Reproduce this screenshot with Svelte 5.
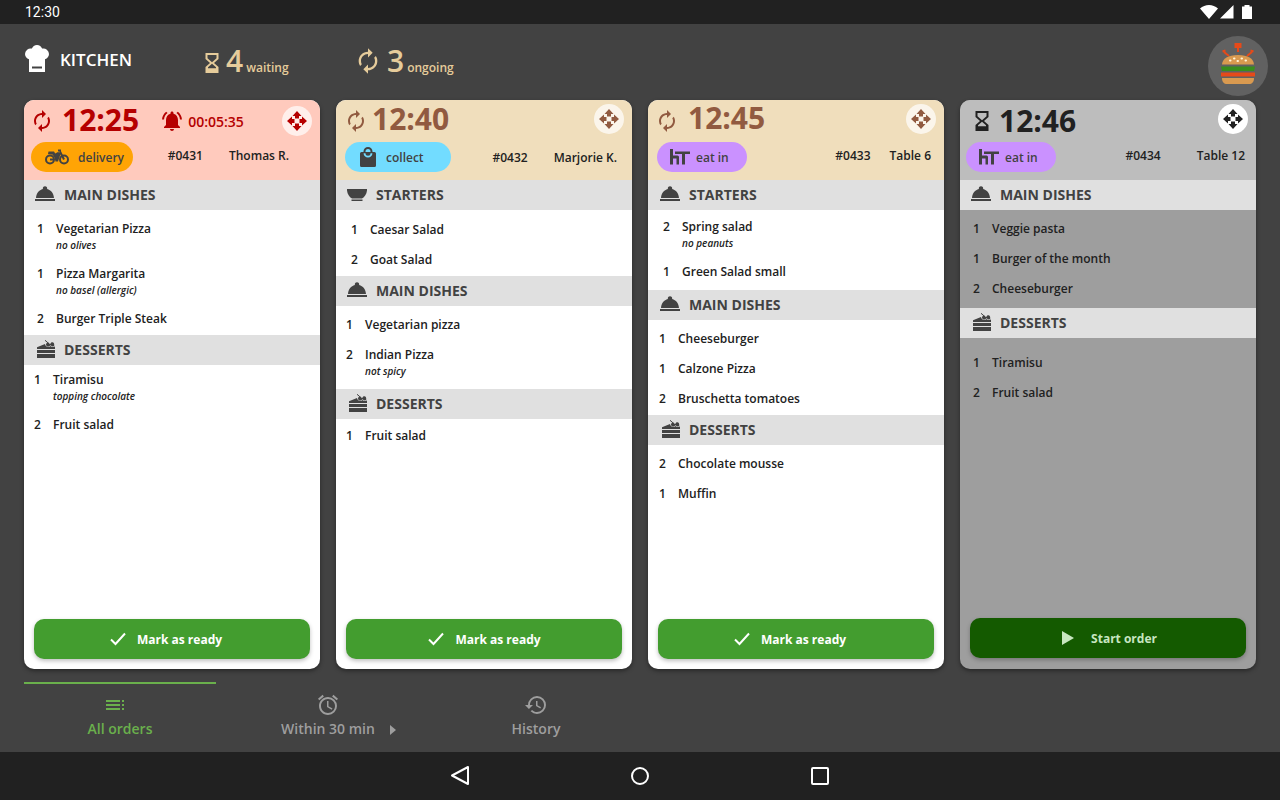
<script>
  const orders = [
    {
      id: '#0431', time: '12:25', status: 'late', slot: 'first', late: '00:05:35',
      type: 'delivery', customer: 'Thomas R.',
      sections: [
        { name: 'MAIN DISHES', icon: 'dome', inset: 'mid', space: 'trim', items: [
          { qty: 1, name: 'Vegetarian Pizza', note: 'no olives' },
          { qty: 1, name: 'Pizza Margarita', note: 'no basel (allergic)' },
          { qty: 2, name: 'Burger Triple Steak' }
        ]},
        { name: 'DESSERTS', icon: 'cake', inset: 'near', space: 'flush', items: [
          { qty: 1, name: 'Tiramisu', note: 'topping chocolate' },
          { qty: 2, name: 'Fruit salad' }
        ]}
      ]
    },
    {
      id: '#0432', time: '12:40', status: 'ongoing', slot: 'second',
      type: 'collect', customer: 'Marjorie K.',
      sections: [
        { name: 'STARTERS', icon: 'bowl', inset: 'far', space: 'drop', items: [
          { qty: 1, name: 'Caesar Salad' },
          { qty: 2, name: 'Goat Salad' }
        ]},
        { name: 'MAIN DISHES', icon: 'dome', inset: 'near', space: 'even', items: [
          { qty: 1, name: 'Vegetarian pizza' },
          { qty: 2, name: 'Indian Pizza', note: 'not spicy' }
        ]},
        { name: 'DESSERTS', icon: 'cake', inset: 'near', space: 'lift', items: [
          { qty: 1, name: 'Fruit salad' }
        ]}
      ]
    },
    {
      id: '#0433', time: '12:45', status: 'ongoing', slot: 'third',
      type: 'eat in', customer: 'Table 6',
      sections: [
        { name: 'STARTERS', icon: 'dome', inset: 'far', space: 'lift', items: [
          { qty: 2, name: 'Spring salad', note: 'no peanuts' },
          { qty: 1, name: 'Green Salad small' }
        ]},
        { name: 'MAIN DISHES', icon: 'dome', inset: 'near', space: 'trim', items: [
          { qty: 1, name: 'Cheeseburger' },
          { qty: 1, name: 'Calzone Pizza' },
          { qty: 2, name: 'Bruschetta tomatoes' }
        ]},
        { name: 'DESSERTS', icon: 'cake', inset: 'near', space: 'even', items: [
          { qty: 2, name: 'Chocolate mousse' },
          { qty: 1, name: 'Muffin' }
        ]}
      ]
    },
    {
      id: '#0434', time: '12:46', status: 'waiting', slot: 'fourth',
      type: 'eat in', customer: 'Table 12',
      sections: [
        { name: 'MAIN DISHES', icon: 'dome', inset: 'mid', space: 'even', items: [
          { qty: 1, name: 'Veggie pasta' },
          { qty: 1, name: 'Burger of the month' },
          { qty: 2, name: 'Cheeseburger' }
        ]},
        { name: 'DESSERTS', icon: 'cake', inset: 'mid', space: 'roomy', items: [
          { qty: 1, name: 'Tiramisu' },
          { qty: 2, name: 'Fruit salad' }
        ]}
      ]
    }
  ];

  let activeTab = $state('all');
</script>

{#snippet renew()}
  <svg class="icon renew" viewBox="0 0 24 24" aria-hidden="true">
    <path d="M12 6v3l4-4-4-4v3c-4.42 0-8 3.58-8 8 0 1.57.46 3.03 1.24 4.26L6.7 14.8c-.45-.83-.7-1.79-.7-2.8 0-3.31 2.69-6 6-6zm6.76 1.74L17.3 9.2c.44.84.7 1.79.7 2.8 0 3.31-2.69 6-6 6v-3l-4 4 4 4v-3c4.42 0 8-3.58 8-8 0-1.57-.46-3.03-1.24-4.26z" />
  </svg>
{/snippet}

{#snippet hourglass()}
  <svg class="icon hourglass" viewBox="5 2 14 20" aria-hidden="true">
    <path fill-rule="evenodd" d="M5.500 2h13v6l-4.500 4 4.500 4v6h-13v-6l4.500-4-4.500-4zM7.500 4v3.300l4.500 4 4.500-4V4zM12 12.700l-4 3.600v.9h8v-.9z" />
  </svg>
{/snippet}

{#snippet sectionIcon(name)}
  {#if name === 'dome'}
    <svg class="icon section-icon" viewBox="0 0 20 18" aria-hidden="true">
      <path d="M0 14h20v2H0zM1 13c.3-4.800 3-8 6.900-9a2.200 2.200 0 1 1 4.200 0c3.900 1 6.600 4.200 6.900 9z" />
    </svg>
  {:else if name === 'bowl'}
    <svg class="icon section-icon" viewBox="0 0 20 18" aria-hidden="true">
      <path d="M0 4h20v1.500c-.5 3.800-2.300 6.500-5 8H5c-2.700-1.500-4.500-4.200-5-8zM4.500 14.500h11V16h-11z" />
    </svg>
  {:else}
    <svg class="icon section-icon" viewBox="0 0 20 18" aria-hidden="true">
      <path d="M2 7.300 10 4c.3 2 1.700 3 3.500 3 .8 0 1.500-.4 2-1 .5.700 1.300 1.100 2.300 1L20 6.500V9H2zM2 10h18v3H2zM2 14h18v4H2z" />
      <path d="M11 4.500c.2-1.400 1.200-2.200 2.500-2l1.500 1.800 1.200-1.800c2.200-.8 3.300.3 3 3.500l-2 .5-1.700-1.300-1.600 1.300c-1.600.2-2.700-.5-2.900-2z" />
      <path class="stem" d="m10 .3 3.200 2.700" />
    </svg>
  {/if}
{/snippet}

{#snippet typeIcon(type)}
  {#if type === 'delivery'}
    <svg class="icon bike" viewBox="0 0 24 16" aria-hidden="true">
      <g class="wheel">
        <circle cx="5" cy="10.500" r="4" />
        <circle cx="19" cy="10.500" r="4" />
        <path d="M5 10.500h4M19 10.500 15 2.500M13 1.500h3" />
      </g>
      <path d="M3.500 2.500h5.500l1.200 2L13 3l3 1.500L14.500 8l-1.500 4.500h-2.500L9.500 8.500 7.500 5.500 3 5z" />
    </svg>
  {:else if type === 'collect'}
    <svg class="icon bag" viewBox="0 0 16 20" aria-hidden="true">
      <path fill-rule="evenodd" d="M1.500 5h13A1.500 1.500 0 0 1 16 6.500v12a1.500 1.500 0 0 1-1.500 1.500h-13A1.500 1.500 0 0 1 0 18.500v-12A1.500 1.500 0 0 1 1.500 5zM3.600 6.200a4.400 4.400 0 0 0 8.800 0h-1.900a2.500 2.500 0 0 1-5 0z" />
      <path class="handle" d="M4.500 6V4.500a3.500 3.500 0 0 1 7 0V6" />
    </svg>
  {:else}
    <svg class="icon seat" viewBox="0 0 20 16" aria-hidden="true">
      <path d="M0 0h3v6.500h4.500A1.500 1.500 0 0 1 9 8v7.500H6.500V9.500H3v6H0zM5 2.500h15V5h-5v10.500h-3V5H5z" fill-rule="evenodd" />
    </svg>
  {/if}
{/snippet}

<div class="screen">
  <div class="status-bar">
    <span>12:30</span>
    <svg class="icon status-icons" viewBox="0 0 54 16" aria-hidden="true">
      <path d="M0 4.500C5-.2 13-.2 18 4.500L9 15zM20 14.500 33.500 1v13.500zM44.500 1v1.500H42V15h10V2.500h-2.500V1z" />
    </svg>
  </div>

  <header>
    <h1>
      <svg class="icon hat" viewBox="0 0 24 28" aria-hidden="true">
        <path fill-rule="evenodd" d="M12 1c2.400 0 4.400 1.500 5.100 3.600A5.600 5.600 0 0 1 24 10c0 2.600-1.700 4.600-4 5.300V28H4V15.300C1.700 14.600 0 12.600 0 10a5.600 5.600 0 0 1 6.900-5.400C7.600 2.500 9.600 1 12 1zM7 22.500v2h10v-2z" />
      </svg>
      KITCHEN
    </h1>
    <p class="stat waiting-stat">{@render hourglass()}<strong>4</strong><span>waiting</span></p>
    <p class="stat">{@render renew()}<strong>3</strong><span>ongoing</span></p>
    <button class="avatar" aria-label="Account">
      <svg viewBox="0 0 36 42" aria-hidden="true">
        <g class="spark">
          <path d="M18 3v6M4 9l5 4M32 9l-5 4" />
          <path d="M15.500 1h5v3h-5zM2.500 8.500l3-1M33.500 8.500l-3-1" />
        </g>
        <path fill="#d99a50" d="M2 21.500c.5-6 6-9.500 16-9.500s15.500 3.500 16 9.500z" />
        <path fill="#388e1c" d="M1 23.500h34l-1 4.500H2z" />
        <path fill="#e64a19" d="M1 29.500h34v4H1z" />
        <path fill="#d99a50" d="M2 35h32c0 4-2 6-5 6H7c-3 0-5-2-5-6z" />
        <path class="seeds" d="M10 17.500h.5M14 15.500h.5M17.500 18h.5M21.500 15.500h.5M25.500 17.500h.5" />
      </svg>
    </button>
  </header>

  <main>
    {#each orders as order}
      <article class="card {order.status} {order.slot}">
        <div class="card-head">
          <div class="head-top">
            {#if order.status === 'waiting'}
              {@render hourglass()}
            {:else}
              {@render renew()}
            {/if}
            <h2>{order.time}</h2>
            {#if order.late}
              <span class="alarm">
                <svg class="icon" viewBox="2 2 20 20" aria-hidden="true">
                  <path d="M7.580 4.080 6.150 2.650C3.750 4.480 2.170 7.300 2.030 10.500h2c.15-2.650 1.510-4.970 3.550-6.420zm12.390 6.420h2c-.15-3.200-1.730-6.020-4.120-7.850l-1.420 1.430c2.020 1.450 3.390 3.770 3.540 6.420zM18 11c0-3.070-1.640-5.640-4.500-6.320V4c0-.83-.67-1.500-1.500-1.500s-1.500.67-1.500 1.500v.68C7.630 5.360 6 7.920 6 11v5l-2 2v1h16v-1l-2-2v-5zm-6 11c1.100 0 2-.9 2-2h-4c0 1.100.9 2 2 2z" />
                </svg>
                {order.late}
              </span>
            {/if}
            <button class="move" aria-label="Move order {order.id}">
              <svg class="icon" viewBox="0 0 20 20" aria-hidden="true">
                <path d="m10 0 4.500 5H12v2.500H8V5H5.500zM10 20l-4.500-5H8v-2.500h4V15h2.500zM0 10l5-4.500V8h2.500v4H5v2.500zM20 10l-5 4.500V12h-2.500V8H15V5.500z" />
              </svg>
            </button>
          </div>
          <div class="head-info">
            <span class="chip {order.type.replace(' ', '-')}">
              {@render typeIcon(order.type)}
              {order.type}
            </span>
            <span class="order-id">{order.id}</span>
            <span class="customer">{order.customer}</span>
          </div>
        </div>

        {#each order.sections as section}
          <h3>{@render sectionIcon(section.icon)}{section.name}</h3>
          <ul class="{section.inset} {section.space}">
            {#each section.items as item}
              <li>
                <span class="qty">{item.qty}</span>
                <div>
                  <p>{item.name}</p>
                  {#if item.note}<p class="note">{item.note}</p>{/if}
                </div>
              </li>
            {/each}
          </ul>
        {/each}

        <button class="action">
          {#if order.status === 'waiting'}
            <svg class="icon" viewBox="0 0 18 18" aria-hidden="true"><path d="M3 2v14l12-7z" /></svg>
            Start order
          {:else}
            <svg class="icon" viewBox="0 0 18 18" aria-hidden="true"><path class="check" d="m2 9.500 4.500 4.500L16 3.500" /></svg>
            Mark as ready
          {/if}
        </button>
      </article>
    {/each}
  </main>

  <nav class="tabs" aria-label="Orders">
    <button class:active={activeTab === 'all'} onclick={() => (activeTab = 'all')}>
      <svg class="icon" viewBox="0 0 24 24" aria-hidden="true">
        <path d="M-2 9h14V7H-2v2zm0 4h14v-2H-2v2zm0 4h14v-2H-2v2zm16 0h2v-2h-2v2zm0-10v2h2V7h-2zm0 6h2v-2h-2v2z" />
      </svg>
      All orders
    </button>
    <button class:active={activeTab === 'soon'} onclick={() => (activeTab = 'soon')}>
      <svg class="icon" viewBox="0 0 24 24" aria-hidden="true">
        <path d="m22 5.720-4.600-3.860-1.290 1.530 4.600 3.860L22 5.720zM7.880 3.390 6.600 1.860 2 5.710l1.290 1.530 4.590-3.850zM12.500 8H11v6l4.750 2.850.75-1.230-4-2.370V8zM12 4c-4.970 0-9 4.030-9 9s4.020 9 9 9a9 9 0 0 0 0-18zm0 16c-3.870 0-7-3.130-7-7s3.130-7 7-7 7 3.130 7 7-3.130 7-7 7z" />
      </svg>
      <span class="with-caret">
        Within 30 min
        <svg class="icon caret" viewBox="0 0 6 10" aria-hidden="true"><path d="m0 0 6 5-6 5z" /></svg>
      </span>
    </button>
    <button class:active={activeTab === 'history'} onclick={() => (activeTab = 'history')}>
      <svg class="icon" viewBox="0 0 24 24" aria-hidden="true">
        <path d="M13 3a9 9 0 0 0-9 9H1l3.890 3.890.07.14L9 12H6c0-3.870 3.130-7 7-7s7 3.130 7 7-3.130 7-7 7c-1.930 0-3.680-.79-4.940-2.060l-1.420 1.420A8.950 8.950 0 0 0 13 21a9 9 0 0 0 0-18zm-1 5v5l4.280 2.540.72-1.210-3.500-2.080V8H12z" />
      </svg>
      History
    </button>
  </nav>

  <div class="system-nav">
    <button aria-label="Back"><svg viewBox="0 0 24 24"><path d="M20 3v17L4 11.500z" /></svg></button>
    <button aria-label="Home"><svg viewBox="0 0 24 24"><circle cx="12" cy="12" r="8" /></svg></button>
    <button aria-label="Recent apps"><svg viewBox="0 0 24 24"><rect x="4" y="4" width="16" height="16" rx="1" /></svg></button>
  </div>
</div>

<style>
  :global(body) {
    margin: 0;
    background: #424242;
  }

  .screen {
    min-height: 100vh;
    display: flex;
    flex-direction: column;
    background: #424242;
    color: #212121;
    font-family: 'Open Sans', 'Noto Sans', sans-serif;
    font-size: 12px;
    font-weight: 600;
  }

  h1, h2, h3, p, ul {
    margin: 0;
    padding: 0;
  }

  button {
    border: none;
    padding: 0;
    font: inherit;
    cursor: pointer;
  }

  .icon {
    display: block;
    flex-shrink: 0;
    fill: currentColor;
  }

  .renew {
    width: 24px;
    height: 24px;
  }

  .hourglass {
    width: 14px;
    height: 20px;
  }

  .status-bar {
    height: 24px;
    box-sizing: border-box;
    padding: 0 26px 0 25px;
    display: flex;
    align-items: center;
    justify-content: space-between;
    background: #212121;
    color: #fff;
    font-family: Roboto, sans-serif;
    font-size: 14px;
    font-weight: 400;
  }

  .status-icons {
    width: 54px;
    height: 16px;
  }

  header {
    display: flex;
    align-items: center;
    box-sizing: border-box;
    height: 76px;
    padding: 0 12px 2px 25px;
    color: #e6cc9b;
  }

  h1 {
    display: flex;
    align-items: center;
    gap: 11px;
    width: 180px;
    color: #fff;
    font-size: 17px;
    line-height: 28px;
    font-weight: 600;
    padding-bottom: 2px;
  }

  .hat {
    width: 24px;
    height: 28px;
    margin-bottom: 4px;
  }

  .stat {
    display: flex;
    align-items: center;
    gap: 3px;
  }

  .waiting-stat {
    width: 151px;
  }

  .stat strong {
    padding-left: 4px;
    font-size: 30px;
    line-height: 40px;
    font-weight: 600;
  }

  .stat span {
    padding-top: 12px;
  }

  .stat .hourglass {
    margin-top: 4px;
  }

  .stat .renew {
    width: 28px;
    height: 28px;
    margin: 0 -2px 0 -2px;
  }

  .avatar {
    width: 60px;
    height: 60px;
    margin: 10px 0 0 auto;
    border-radius: 50%;
    background: #616161;
    display: flex;
    align-items: center;
    justify-content: center;
  }

  .avatar svg {
    width: 36px;
    height: 42px;
    margin-bottom: 4px;
  }

  .spark {
    fill: #e64a19;
    stroke: #e64a19;
    stroke-width: 2;
  }

  .seeds {
    stroke: #fff3d6;
    stroke-width: 2;
    stroke-linecap: round;
  }

  main {
    flex: 1;
    display: grid;
    grid-template-columns: repeat(4, 1fr);
    gap: 16px;
    padding: 0 24px;
  }

  .card {
    --head-left: 8px;
    --time-gap: 8px;
    --time-lift: 4px;
    --chip-left: 9px;
    --info-gap: 26px;
    --info-right: 15px;
    --info-lift: 4px;
    display: flex;
    flex-direction: column;
    border-radius: 10px;
    background: #fff;
    box-shadow: 0 2px 4px rgba(0, 0, 0, 0.4);
  }

  .first {
    --head-left: 6px;
    --time-lift: 2px;
    --chip-left: 7px;
    --info-right: 31px;
  }

  .second {
    --time-gap: 4px;
    --info-lift: 0;
  }

  .third {
    --head-left: 7px;
    --time-gap: 9px;
    --time-lift: 6px;
    --info-gap: 19px;
    --info-right: 13px;
  }

  .fourth {
    --head-left: 15px;
    --time-gap: 10px;
    --time-lift: 0;
    --chip-left: 6px;
    --info-gap: 36px;
    --info-right: 11px;
  }

  .card-head {
    height: 80px;
    border-radius: 10px 10px 0 0;
    background: #f0debc;
  }

  .late .card-head {
    background: #ffcabd;
  }

  .waiting .card-head {
    background: #bdbdbd;
  }

  .card.waiting {
    background: #9e9e9e;
  }

  .head-top {
    display: flex;
    align-items: center;
    height: 42px;
    padding: 0 8px 0 var(--head-left);
    color: #915a40;
  }

  .late .head-top {
    color: #b50000;
  }

  .waiting .head-top {
    color: #212121;
  }

  h2 {
    margin-left: var(--time-gap);
    padding-bottom: var(--time-lift);
    font-size: 30px;
    line-height: 36px;
    font-weight: 700;
  }

  .alarm {
    display: flex;
    align-items: center;
    gap: 6px;
    margin-left: 23px;
    font-size: 14px;
  }

  .alarm svg {
    width: 20px;
    height: 20px;
  }

  .move {
    width: 30px;
    height: 30px;
    margin: 0 0 4px auto;
    border-radius: 50%;
    background: rgba(255, 255, 255, 0.7);
    color: inherit;
    display: flex;
    align-items: center;
    justify-content: center;
  }

  .late .move {
    margin-bottom: 0;
  }

  .waiting .move {
    background: #fff;
  }

  .move svg {
    width: 20px;
    height: 20px;
  }

  .head-info {
    display: flex;
    align-items: center;
    padding: 0 var(--info-right) 0 var(--chip-left);
  }

  .chip {
    display: flex;
    align-items: center;
    box-sizing: border-box;
    height: 30px;
    border-radius: 15px;
    color: #424242;
  }

  .delivery {
    gap: 9px;
    width: 102px;
    padding-left: 14px;
    background: #ffa405;
  }

  .collect {
    gap: 10px;
    width: 106px;
    padding-left: 15px;
    background: #72dcff;
  }

  .eat-in {
    gap: 6px;
    width: 90px;
    padding-left: 13px;
    background: #ca91ff;
  }

  .bike {
    width: 24px;
    height: 16px;
  }

  .wheel {
    fill: none;
    stroke: currentColor;
    stroke-width: 2;
  }

  .bag {
    width: 16px;
    height: 20px;
  }

  .handle {
    fill: none;
    stroke: currentColor;
    stroke-width: 2;
  }

  .seat {
    width: 20px;
    height: 16px;
  }

  .order-id {
    margin: 0 var(--info-gap) 0 auto;
  }

  .order-id,
  .customer {
    padding-bottom: var(--info-lift);
  }

  h3 {
    display: flex;
    align-items: center;
    gap: 9px;
    box-sizing: border-box;
    height: 30px;
    padding: 0 0 2px 11px;
    background: #e0e0e0;
    color: #424242;
    font-size: 14px;
    font-weight: 700;
  }

  .third h3 {
    padding-left: 12px;
  }

  .section-icon {
    width: 20px;
    height: 18px;
  }

  .stem {
    fill: none;
    stroke: currentColor;
  }

  ul {
    list-style: none;
  }

  .near { padding-left: 10px; }
  .mid { padding-left: 13px; }
  .far { padding-left: 15px; }

  .third .near { padding-left: 11px; }

  .flush { padding-top: 0; }
  .even { padding-top: 4px; padding-bottom: 4px; }
  .trim { padding-top: 4px; padding-bottom: 1px; }
  .drop { padding-top: 5px; padding-bottom: 1px; }
  .lift { padding-top: 2px; padding-bottom: 3px; }
  .roomy { padding-top: 10px; padding-bottom: 4px; }

  li {
    display: flex;
    line-height: 30px;
  }

  .qty {
    width: 19px;
  }

  .note {
    margin-top: -6px;
    padding-bottom: 7px;
    font-size: 10px;
    line-height: 14px;
    font-style: italic;
  }

  .action {
    display: flex;
    align-items: center;
    justify-content: center;
    gap: 10px;
    height: 40px;
    margin: auto 10px 10px;
    border-radius: 10px;
    background: #439d2f;
    color: #fff;
    font-weight: 700;
    box-shadow: 0 2px 4px rgba(0, 0, 0, 0.25);
  }

  .first .action,
  .third .action {
    padding-right: 13px;
  }

  .waiting .action {
    gap: 14px;
    margin-bottom: 11px;
    background: #145a00;
    color: #c8e6c0;
  }

  .action svg {
    width: 18px;
    height: 18px;
  }

  .check {
    fill: none;
    stroke: currentColor;
    stroke-width: 2;
  }

  .tabs {
    display: flex;
    gap: 16px;
    padding: 13px 24px 0;
  }

  .tabs button {
    display: flex;
    flex-direction: column;
    align-items: center;
    width: 192px;
    height: 70px;
    padding-top: 9px;
    border-top: 2px solid transparent;
    background: none;
    color: #9e9e9e;
    font-size: 14px;
    line-height: 24px;
  }

  .tabs button.active {
    border-color: #6ab04c;
    color: #6ab04c;
  }

  .tabs button > svg {
    width: 24px;
    height: 24px;
    overflow: visible;
  }

  .with-caret {
    position: relative;
  }

  .caret {
    position: absolute;
    top: 8px;
    right: -21px;
    width: 6px;
    height: 10px;
  }

  .system-nav {
    display: flex;
    align-items: center;
    justify-content: center;
    gap: 156px;
    height: 48px;
    background: #212121;
  }

  .system-nav button {
    width: 24px;
    height: 24px;
    background: none;
  }

  .system-nav svg {
    display: block;
    fill: none;
    stroke: #fff;
    stroke-width: 2;
    stroke-linejoin: round;
  }
</style>
